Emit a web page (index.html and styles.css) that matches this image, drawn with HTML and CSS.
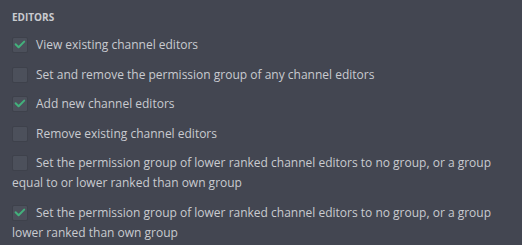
FILE: index.html
```html
<!DOCTYPE html>
<html>
<head>
<meta charset="utf-8">
<link rel="stylesheet" href="styles.css">
</head>
<body>
<section class="group">
  <h3 class="title">Editors</h3>
  <div class="row"><span class="cb checked"><svg viewBox="0 0 14 14"><path d="M2.6 6.3L5.6 9.3L11.2 3.6"/></svg></span>View existing channel editors</div>
  <div class="row"><span class="cb"></span>Set and remove the permission group of any channel editors</div>
  <div class="row"><span class="cb checked"><svg viewBox="0 0 14 14"><path d="M2.6 6.3L5.6 9.3L11.2 3.6"/></svg></span>Add new channel editors</div>
  <div class="row"><span class="cb"></span>Remove existing channel editors</div>
  <div class="row"><span class="cb"></span>Set the permission group of lower ranked channel editors to no group, or a group equal to or lower ranked than own group</div>
  <div class="row"><span class="cb checked"><svg viewBox="0 0 14 14"><path d="M2.6 6.3L5.6 9.3L11.2 3.6"/></svg></span>Set the permission group of lower ranked channel editors to no group, or a group lower ranked than own group</div>
</section>
</body>
</html>
```

FILE: styles.css
```css
html, body {
  margin: 0;
  padding: 0;
  background: #434651;
}
body {
  font-family: "Open Sans", "Noto Sans", sans-serif;
  color: #c9cbd0;
  font-size: 12px;
}
.group {
  padding: 9px 12px 0 12px;
}
.title {
  margin: 0 0 10px 0;
  font-size: 10px;
  font-weight: 700;
  text-transform: uppercase;
  color: #c9cbd0;
  line-height: 16px;
}
.row {
  line-height: 20px;
  margin-bottom: 9.6px;
}
.cb {
  display: inline-block;
  box-sizing: border-box;
  width: 16px;
  height: 16px;
  border: 1px solid #3e414b;
  background: #4c505b;
  border-radius: 2px;
  vertical-align: -4px;
  margin-right: 8px;
}
.cb svg {
  display: block;
  width: 14px;
  height: 14px;
}
.cb svg path {
  fill: none;
  stroke: #43b17c;
  stroke-width: 2;
  stroke-linecap: round;
  stroke-linejoin: round;
}
```
